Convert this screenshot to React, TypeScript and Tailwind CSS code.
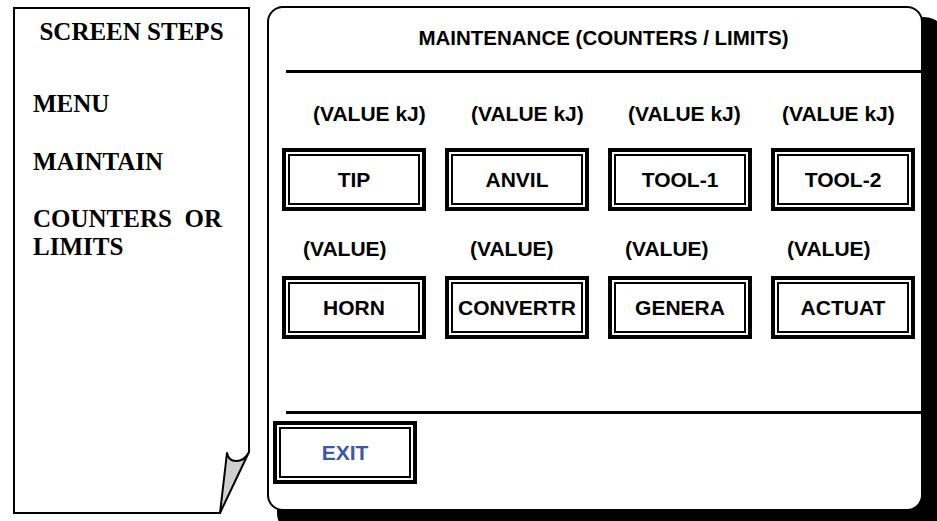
const serif = "font-['Liberation_Serif','Times_New_Roman',serif]";
const sans = "font-['Liberation_Sans',Arial,sans-serif]";

const topRow = [
  { label: 'TIP', pad: 'pl-[31px]' },
  { label: 'ANVIL', pad: 'pl-[26px]' },
  { label: 'TOOL-1', pad: 'pl-[20px]' },
  { label: 'TOOL-2', pad: 'pl-[11px]' },
];

const bottomRow = [
  { label: 'HORN', pad: 'pl-[21px]' },
  { label: 'CONVERTR', pad: 'pl-[25px]' },
  { label: 'GENERA', pad: 'pl-[17px]' },
  { label: 'ACTUAT', pad: 'pl-[16px]' },
];

// double-framed button used on the panel
const FrameButton = ({ label, blue = false }: { label: string; blue?: boolean }) => (
  <div className="w-[144px] h-[63px] border-[4px] border-black p-[2px] bg-white shrink-0">
    <div
      className={`h-full border-[2px] border-black flex items-center justify-center text-[21px] leading-[23px] font-bold whitespace-nowrap ${
        blue ? 'text-[#3d56a6]' : 'text-black'
      }`}
    >
      {label}
    </div>
  </div>
);

const PageCurl = () => (
  <svg
    className="absolute right-[-2px] bottom-[-2px]"
    width="42"
    height="72"
    viewBox="0 0 42 72"
  >
    <rect x="0" y="0" width="42" height="72" fill="#fff" />
    <line x1="41" y1="0" x2="41" y2="11" stroke="#000" strokeWidth="2" />
    <line x1="0" y1="71" x2="13" y2="71" stroke="#000" strokeWidth="2" />
    <path
      d="M19 11 C20 16 22 19 28 19 C34 19 38 16 41 10 L12 71 Z"
      fill="#cfcfcf"
      stroke="#000"
      strokeWidth="2"
      strokeLinejoin="round"
    />
  </svg>
);

export default function App() {
  return (
    <div className={`w-[937px] h-[521px] overflow-hidden bg-white flex items-start gap-[17px] pl-[13px] ${sans}`}>
      {/* Left: screen steps sheet */}
      <div className={`relative mt-[7px] w-[237px] h-[507px] border-2 border-black text-black font-bold text-[25px] leading-[28px] ${serif}`}>
        <div className="pt-[9px] text-center">SCREEN STEPS</div>
        <div className="pl-[18px] mt-[44px]">MENU</div>
        <div className="pl-[18px] mt-[30px]">MAINTAIN</div>
        <div className="pl-[18px] mt-[29px] w-[207px] text-justify">COUNTERS OR LIMITS</div>
        <PageCurl />
      </div>

      {/* Right: maintenance screen */}
      <div className="mt-[6px] w-[656px] h-[505px] border-2 border-black rounded-[16px] bg-white shadow-[17px_18px_0_7px_#000] flex flex-col text-black font-bold">
        <div className="ml-[17px] pt-[18px] text-center text-[20.5px] leading-[23px]">
          MAINTENANCE (COUNTERS / LIMITS)
        </div>
        <div className="ml-[17px] mt-[21px] h-[3px] bg-black" />

        <div className="ml-[13px] mt-[29px] flex gap-[19px] text-[21px] leading-[23px]">
          {topRow.map((b) => (
            <div key={b.label} className={`w-[144px] whitespace-nowrap ${b.pad}`}>
              (VALUE kJ)
            </div>
          ))}
        </div>
        <div className="ml-[13px] mt-[23px] flex gap-[19px]">
          {topRow.map((b) => (
            <FrameButton key={b.label} label={b.label} />
          ))}
        </div>

        <div className="ml-[13px] mt-[26px] flex gap-[19px] text-[21px] leading-[23px]">
          {bottomRow.map((b) => (
            <div key={b.label} className={`w-[144px] whitespace-nowrap ${b.pad}`}>
              (VALUE)
            </div>
          ))}
        </div>
        <div className="ml-[13px] mt-[16px] flex gap-[19px]">
          {bottomRow.map((b) => (
            <FrameButton key={b.label} label={b.label} />
          ))}
        </div>

        <div className="ml-[17px] mt-[72px] h-[3px] bg-black" />
        <div className="ml-[4px] mt-[7px]">
          <FrameButton label="EXIT" blue />
        </div>
      </div>
    </div>
  );
}
